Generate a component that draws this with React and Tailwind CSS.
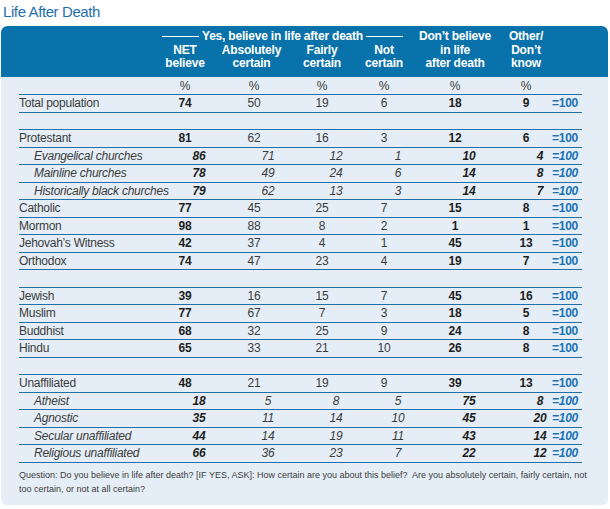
import React from "react";

const rows = [
  { t: "m", l: "Total population", v: [74, 50, 19, 6, 18, 9] },
  { t: "s" },
  { t: "m", l: "Protestant", v: [81, 62, 16, 3, 12, 6] },
  { t: "i", l: "Evangelical churches", v: [86, 71, 12, 1, 10, 4] },
  { t: "i", l: "Mainline churches", v: [78, 49, 24, 6, 14, 8] },
  { t: "i", l: "Historically black churches", v: [79, 62, 13, 3, 14, 7] },
  { t: "m", l: "Catholic", v: [77, 45, 25, 7, 15, 8] },
  { t: "m", l: "Mormon", v: [98, 88, 8, 2, 1, 1] },
  { t: "m", l: "Jehovah\u2019s Witness", v: [42, 37, 4, 1, 45, 13] },
  { t: "m", l: "Orthodox", v: [74, 47, 23, 4, 19, 7] },
  { t: "s" },
  { t: "m", l: "Jewish", v: [39, 16, 15, 7, 45, 16] },
  { t: "m", l: "Muslim", v: [77, 67, 7, 3, 18, 5] },
  { t: "m", l: "Buddhist", v: [68, 32, 25, 9, 24, 8] },
  { t: "m", l: "Hindu", v: [65, 33, 21, 10, 26, 8] },
  { t: "s" },
  { t: "m", l: "Unaffiliated", v: [48, 21, 19, 9, 39, 13] },
  { t: "i", l: "Atheist", v: [18, 5, 8, 5, 75, 8] },
  { t: "i", l: "Agnostic", v: [35, 11, 14, 10, 45, 20] },
  { t: "i", l: "Secular unaffiliated", v: [44, 14, 19, 11, 43, 14] },
  { t: "i", l: "Religious unaffiliated", v: [66, 36, 23, 7, 22, 12] },
];

const bold = [true, false, false, false, true, true];
const GRID = "grid grid-cols-[132px_68px_70px_66px_58px_84px_58px_26px]";

function Row({ r, last }) {
  const base = `${GRID} h-[17.5px] border-t border-[#1f6fa9] ${last ? "border-b h-[18.5px]" : ""}`;
  if (r.t === "s") return <div className={base} />;
  const it = r.t === "i";
  return (
    <div className={`${base} items-center leading-[16px] text-[12px] tracking-[-0.25px]`}>
      <div className={`whitespace-nowrap text-[#3b3b3b] ${it ? "italic pl-[15px]" : ""}`}>{r.l}</div>
      {r.v.map((n, i) => (
        <div
          key={i}
          className={`text-center ${it ? "italic pl-[28px]" : ""} ${bold[i] ? "font-bold text-[#1e1e1e]" : "text-[#3b3b3b]"}`}
        >
          {n}
        </div>
      ))}
      <div className={`flex justify-end whitespace-nowrap pr-[3px] font-bold text-[#1b72b4] ${it ? "italic" : ""}`}>=100</div>
    </div>
  );
}

export default function App() {
  return (
    <div className="w-[610px] h-[509px] bg-white" style={{ fontFamily: '"Liberation Sans", Arial, sans-serif' }}>
      <div className="h-[26px] pl-[3px] pt-[1.5px] text-[15px] leading-[20px] tracking-[-0.4px] text-[#1f6fae]">
        Life After Death
      </div>
      <div className="ml-[1px] w-[607px] rounded-[6px] bg-[#e5eef6] overflow-hidden">
        <div className="h-[51px] bg-[#0a72aa] pl-[18px] pt-[4px] rounded-t-[6px]">
          <div className={`${GRID} grid-rows-[13.5px_13.5px_13.5px] text-white font-bold text-[12px] leading-[13.5px] tracking-[-0.2px]`}>
            <div className="col-start-2 col-span-4 row-start-1 flex items-center gap-[3px] pl-[11px] pr-[10px]">
              <div className="flex-1 h-px bg-white" />
              <div className="whitespace-nowrap">Yes, believe in life after death</div>
              <div className="flex-1 h-px bg-white" />
            </div>
            <div className="col-start-2 row-start-2 row-span-2 text-center">NET<br />believe</div>
            <div className="col-start-3 row-start-2 row-span-2 text-center pr-[5px]">Absolutely<br />certain</div>
            <div className="col-start-4 row-start-2 row-span-2 text-center">Fairly<br />certain</div>
            <div className="col-start-5 row-start-2 row-span-2 text-center">Not<br />certain</div>
            <div className="col-start-6 row-start-1 row-span-3 text-center whitespace-nowrap">Don{"\u2019"}t believe<br />in life<br />after death</div>
            <div className="col-start-7 row-start-1 row-span-3 text-center whitespace-nowrap">Other/<br />Don{"\u2019"}t<br />know</div>
          </div>
        </div>
        <div className="pl-[18px] pr-[26px]">
          <div className={`${GRID} h-[17px] items-center text-[12px] leading-[16px] text-[#3b3b3b]`}>
            <div />
            <div className="text-center">%</div>
            <div className="text-center">%</div>
            <div className="text-center">%</div>
            <div className="text-center">%</div>
            <div className="text-center">%</div>
            <div className="text-center">%</div>
            <div />
          </div>
          {rows.map((r, i) => (
            <Row key={i} r={r} last={i === rows.length - 1} />
          ))}
          <div className="mt-[5.5px] pb-[9px] whitespace-nowrap text-[9px] leading-[14px] text-[#3b3b3b]">
            Question: Do you believe in life after death? [IF YES, ASK]: How certain are you about this belief?{"\u00a0"} Are you absolutely certain, fairly certain, not
            <br />
            too certain, or not at all certain?
          </div>
        </div>
      </div>
    </div>
  );
}
